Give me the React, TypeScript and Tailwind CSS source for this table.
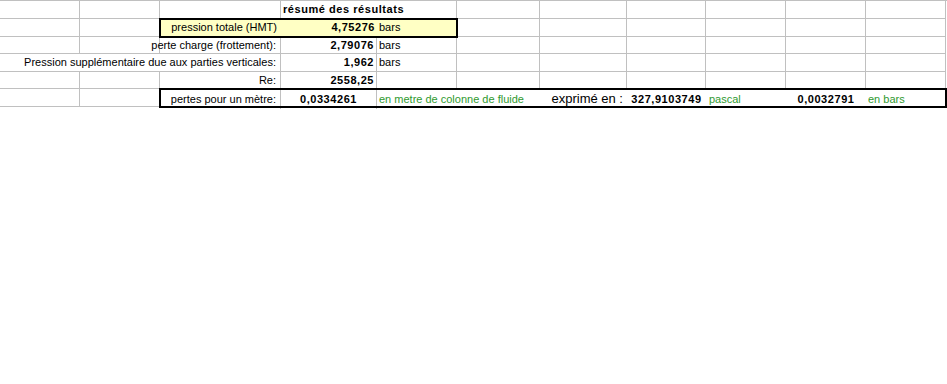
const cell = "flex items-center border-r border-b border-[#c0c0c0] whitespace-nowrap overflow-visible";
const green = "text-[#2f9a2f]";
const num = "font-bold tracking-[0.55px]";

function Cell({ span = 1, className = "", children }: { span?: number; className?: string; children?: React.ReactNode }) {
	const spans: Record<number, string> = { 1: "", 2: "col-span-2", 3: "col-span-3" };
	return <div className={`${cell} ${spans[span]} ${className}`}>{children}</div>;
}

export default function App() {
	return (
		<div className="h-[384px] w-[947px] bg-white font-['Liberation_Sans',Arial,sans-serif] text-[11px] text-black">
			<div className="grid grid-cols-[80px_80px_121px_96px_80px_83px_87px_79px_80px_80px_80px] grid-rows-[18px_18px_17px_18px_17px_18px] border-t border-[#c0c0c0]">
				{/* row 1 */}
				<Cell />
				<Cell />
				<Cell />
				<Cell span={2} className={`pl-[2px] ${num}`}>
					résumé des résultats
				</Cell>
				<Cell />
				<Cell />
				<Cell />
				<Cell />
				<Cell />
				<Cell />

				{/* row 2 */}
				<Cell />
				<Cell />
				<div className="relative z-10 col-span-3 grid grid-cols-[121px_96px_80px] bg-[#ffffc4] outline-2 -outline-offset-1 outline-black border-b border-[#c0c0c0]">
					<div className="flex items-center justify-end pr-[4px]">pression totale (HMT)</div>
					<div className={`flex items-center justify-end pr-[2px] ${num}`}>4,75276</div>
					<div className="flex items-center pl-[2px]">bars</div>
				</div>
				<Cell />
				<Cell />
				<Cell />
				<Cell />
				<Cell />
				<Cell />

				{/* row 3 */}
				<Cell />
				<Cell />
				<Cell className="justify-end pr-[4px]">perte charge (frottement):</Cell>
				<Cell className={`justify-end pr-[2px] ${num}`}>2,79076</Cell>
				<Cell className="pl-[2px]">bars</Cell>
				<Cell />
				<Cell />
				<Cell />
				<Cell />
				<Cell />
				<Cell />

				{/* row 4 */}
				<Cell span={3} className="justify-end pr-[4px]">
					Pression supplémentaire due aux parties verticales:
				</Cell>
				<Cell className={`justify-end pr-[2px] ${num}`}>1,962</Cell>
				<Cell className="pl-[2px]">bars</Cell>
				<Cell />
				<Cell />
				<Cell />
				<Cell />
				<Cell />
				<Cell />

				{/* row 5 */}
				<Cell />
				<Cell />
				<Cell className="justify-end pr-[4px]">Re:</Cell>
				<Cell className={`justify-end pr-[2px] ${num}`}>2558,25</Cell>
				<Cell />
				<Cell />
				<Cell />
				<Cell />
				<Cell />
				<Cell />
				<Cell />

				{/* row 6 */}
				<Cell />
				<Cell />
				<div className="relative z-10 col-span-9 grid grid-cols-[121px_96px_163px_87px_79px_80px_80px_80px] outline-2 -outline-offset-1 outline-black border-b border-[#c0c0c0]">
					<div className="flex items-center justify-end border-r border-[#c0c0c0] pr-[4px]">pertes pour un mètre:</div>
					<div className={`flex items-center justify-center border-r border-[#c0c0c0] ${num}`}>0,0334261</div>
					<div className={`flex items-center pl-[2px] ${green}`}>en metre de colonne de fluide</div>
					<div className="flex items-center justify-end pr-[4px] text-[13px]">exprimé en :</div>
					<div className={`flex items-center justify-center ${num}`}>327,9103749</div>
					<div className={`flex items-center pl-[3px] ${green}`}>pascal</div>
					<div className={`flex items-center justify-center ${num}`}>0,0032791</div>
					<div className={`flex items-center pl-[2px] ${green}`}>en bars</div>
				</div>
			</div>
		</div>
	);
}
